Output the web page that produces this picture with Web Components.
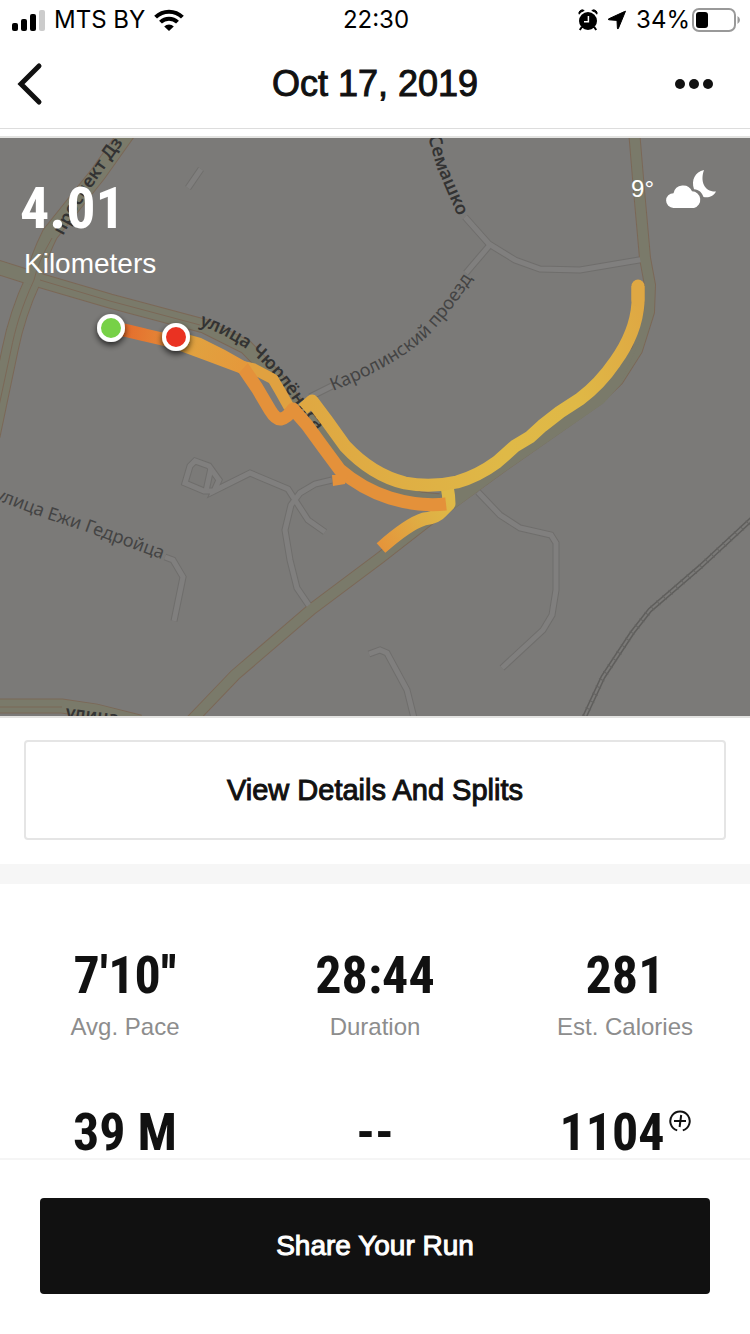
<!DOCTYPE html>
<html lang="en">
<head>
<meta charset="utf-8">
<meta name="viewport" content="width=device-width, initial-scale=1">
<title>Run summary</title>
<style>
    html, body {
        margin: 0;
        height: 100%;
    }
    body {
        background: #fff;
        color: #111;
        font-family: "Liberation Sans", Arial, sans-serif;
    }
</style>
</head>
<body>
<run-screen>
    <status-bar slot="top" carrier="MTS BY" time="22:30" battery="34%"></status-bar>
    <nav-header slot="top">Oct 17, 2019</nav-header>

    <run-map distance="4.01" unit="Kilometers" temperature="9°"></run-map>
    <details-link>View Details And Splits</details-link>
    <stat-grid>
        <run-stat value="7'10''">Avg. Pace</run-stat>
        <run-stat value="28:44">Duration</run-stat>
        <run-stat value="281">Est. Calories</run-stat>
        <run-stat value="39 M"></run-stat>
        <run-stat value="--"></run-stat>
        <run-stat value="1104" badge></run-stat>
    </stat-grid>

    <share-bar slot="bottom">Share Your Run</share-bar>
</run-screen>

<script>
/** Base class: fills an open shadow root from the subclass's template(). */
class BaseElement extends HTMLElement {
    constructor() {
        super();
        this.attachShadow({ mode: "open" });
    }

    connectedCallback() {
        this.shadowRoot.innerHTML = this.template();
    }

    attr(name) {
        return this.getAttribute(name) ?? "";
    }
}

/** Full-height column: fixed top, scrolling middle, fixed bottom. */
class RunScreen extends BaseElement {
    template() {
        return `
            <style>
                :host {
                    display: flex;
                    flex-direction: column;
                    height: 100vh;
                }
                main {
                    flex: 1;
                    min-height: 0;
                    overflow-y: auto;
                    scrollbar-width: none;
                }
            </style>
            <slot name="top"></slot>
            <main><slot></slot></main>
            <slot name="bottom"></slot>
        `;
    }
}

class StatusBar extends BaseElement {
    template() {
        return `
            <style>
                :host {
                    display: grid;
                    grid-template-columns: 1fr auto 1fr;
                    align-items: center;
                    flex: none;
                    height: 40px;
                    padding: 0 10px 0 12px;
                    color: #000;
                    font: 24px/40px Inter, "Liberation Sans", sans-serif;
                }
                .side {
                    display: flex;
                    align-items: center;
                    gap: 9px;
                }
                .end {
                    justify-content: flex-end;
                }
                .charge {
                    display: flex;
                    align-items: center;
                    gap: 2px;
                }
                svg {
                    display: block;
                }
            </style>
            <div class="side">
                <svg width="33" height="22" viewBox="0 0 33 22" aria-hidden="true">
                    <rect x="0" y="14" width="6" height="8" rx="2"/>
                    <rect x="9" y="10" width="6" height="12" rx="2"/>
                    <rect x="18" y="5" width="6" height="17" rx="2"/>
                    <rect x="27" y="1" width="6" height="21" rx="2" fill="#ccc"/>
                </svg>
                <span>${this.attr("carrier")}</span>
                <svg width="30" height="22" viewBox="0 0 30 22" aria-hidden="true">
                    <g fill="none" stroke="#000" stroke-width="4">
                        <path d="M1.6 8.2A19 19 0 0 1 28.4 8.2"/>
                        <path d="M6.5 13.2A12 12 0 0 1 23.5 13.2"/>
                    </g>
                    <path d="M10.2 17.4a6.8 6.8 0 0 1 9.6 0L15 22z"/>
                </svg>
            </div>
            <time>${this.attr("time")}</time>
            <div class="side end">
                <svg width="20" height="22" viewBox="0 0 20 22" aria-hidden="true">
                    <circle cx="10" cy="12" r="9"/>
                    <path d="M1 5.2A11 11 0 0 1 6.2 1.5 3.4 3.4 0 0 0 1 5.2zM19 5.2A11 11 0 0 0 13.8 1.5 3.4 3.4 0 0 1 19 5.2z" stroke="#000"/>
                    <path d="M3.8 18l-2 3M16.2 18l2 3" stroke="#000" stroke-width="2"/>
                    <path d="M10.400 7v5.800H6" fill="none" stroke="#fff" stroke-width="1.500"/>
                </svg>
                <svg width="20" height="20" viewBox="0 0 20 20" aria-hidden="true">
                    <path d="M18.500 1.200L11.400 18.400q-.8 1.400-1-.2L10 10.400 2 9.800q-1.600-.2-.2-1L17.400 1.600z" stroke="#000" stroke-linejoin="round"/>
                </svg>
                <div class="charge">
                    <span>${this.attr("battery")}</span>
                    <svg width="48" height="24" viewBox="0 0 48 24" aria-hidden="true">
                        <rect x="1" y="1" width="42" height="22" rx="6" fill="none" stroke="#999" stroke-width="2"/>
                        <rect x="4" y="4" width="12" height="16" rx="3"/>
                        <path d="M45.500 8q2.500 1.600 2.500 4t-2.500 4z" fill="#999"/>
                    </svg>
                </div>
            </div>
        `;
    }
}

class NavHeader extends BaseElement {
    template() {
        return `
            <style>
                :host {
                    display: grid;
                    grid-template-columns: 1fr auto 1fr;
                    align-items: center;
                    flex: none;
                    height: 88px;
                    padding: 0 12px;
                    border-bottom: 1px solid #ddd;
                }
                h1 {
                    margin: 0;
                    font-size: 36px;
                    font-weight: 400;
                    line-height: 40px;
                    -webkit-text-stroke: 1px #111;
                }
                button {
                    display: flex;
                    align-items: center;
                    width: 54px;
                    height: 54px;
                    padding: 0;
                    border: 0;
                    background: none;
                }
                .more {
                    justify-content: center;
                    justify-self: end;
                    margin-right: 17px;
                }
            </style>
            <button aria-label="Back">
                <svg width="36" height="44" viewBox="0 0 36 44" aria-hidden="true">
                    <path d="M27 4L9 22l18 18" fill="none" stroke="#111" stroke-width="5" stroke-linecap="round"/>
                </svg>
            </button>
            <h1><slot></slot></h1>
            <button class="more" aria-label="More">
                <svg width="40" height="10" viewBox="0 0 40 10" fill="#111" aria-hidden="true">
                    <circle cx="6" cy="5" r="5"/>
                    <circle cx="20" cy="5" r="5"/>
                    <circle cx="34" cy="5" r="5"/>
                </svg>
            </button>
        `;
    }
}

/** Street map with the recorded route, and the distance and weather over it. */
class RunMap extends BaseElement {
    // main roads: [path, width]
    static ROADS = [
        ["M132 126L98 174 50 234Q38 258 33 280C20 308 14 330 10 350L-8 436", 15],
        ["M-6 266L35 279 110 301 204 326 246 347 276 378 312 424 346 461 385 487 420 499 452 502", 13],
        ["M634 130L639 190 645 258 650 285 649 312 637 350 618 380 597 400 500 468 430 519 380 558 312 609 235 675 190 722", 10],
        ["M-4 706H62L96 711 140 722", 13],
    ];

    static STREETS = [
        "M188 188L201 169",
        "M465 217L489 244 515 260 540 269 580 270 645 259",
        "M489 246L466 273",
        "M332 386L310 397",
        "M214 491L204 491 185 483 190 466 195 461 209 466 219 480 214 491 250 473 288 489 295 500 308 520 325 532",
        "M211 468L206 491",
        "M332 480L315 484 300 493 291 505 285 530 290 560 297 588 312 610",
        "M478 492L500 515 520 528 551 535 556 543 556 590 552 615 543 630 502 668",
        "M369 654L380 650 387 653 407 690 414 718",
        "M165 557L173 560 183 577 174 621",
    ];

    map() {
        const roads = RunMap.ROADS;
        const streets = RunMap.STREETS;
        const layer = (list, extra) =>
            list.map(([d, w]) => `<path d="${d}" stroke-width="${w + extra}"/>`).join("");
        return `
            <svg class="map" viewBox="0 138 750 578" role="img" aria-label="Route map">
                <defs>
                    <linearGradient id="start" gradientUnits="userSpaceOnUse" x1="120" y1="330" x2="180" y2="340">
                        <stop offset="0" stop-color="#e56a2b"/>
                        <stop offset="1" stop-color="#e4913b"/>
                    </linearGradient>
                    <linearGradient id="merge" gradientUnits="userSpaceOnUse" x1="185" y1="340" x2="250" y2="375">
                        <stop offset="0" stop-color="#e0a340"/>
                        <stop offset="1" stop-color="#e6973a"/>
                    </linearGradient>
                    <linearGradient id="outer" gradientUnits="userSpaceOnUse" x1="305" y1="400" x2="640" y2="300">
                        <stop offset="0" stop-color="#dfa842"/>
                        <stop offset=".5" stop-color="#dfb947"/>
                        <stop offset=".75" stop-color="#dfb846"/>
                        <stop offset="1" stop-color="#dfa843"/>
                    </linearGradient>
                    <linearGradient id="spur" gradientUnits="userSpaceOnUse" x1="380" y1="550" x2="450" y2="500">
                        <stop offset="0" stop-color="#e5933a"/>
                        <stop offset=".6" stop-color="#dfae44"/>
                        <stop offset="1" stop-color="#dfb947"/>
                    </linearGradient>
                    <filter id="shadow" x="-50%" y="-50%" width="200%" height="200%">
                        <feDropShadow dx="0" dy="3" stdDeviation="3" flood-opacity=".7"/>
                    </filter>
                    <path id="avenue" d="M63 236L78 208 98 178 132 130"/>
                    <path id="semashko" d="M428 137L437 168 462 226"/>
                    <path id="karolinski" d="M333 391Q400 364 431 333 454 308 478 270"/>
                    <path id="churlionis" d="M199 325Q232 337 254 355 273 372 295 403L326 444"/>
                    <path id="giedroyc" d="M-6 499L50 520 87 532 178 565"/>
                    <path id="lower" d="M65 718L130 726"/>
                </defs>

                <rect y="138" width="750" height="578" fill="#7b7a78"/>

                <g fill="none" stroke="#6f6e6c" stroke-width="7">
                    ${streets.map((d) => `<path d="${d}"/>`).join("")}
                </g>
                <g fill="none" stroke="#7b6857">${layer(roads, 2)}</g>
                <g fill="none" stroke="#807f7e" stroke-width="5">
                    ${streets.map((d) => `<path d="${d}"/>`).join("")}
                </g>
                <g fill="none" stroke="#7a7a6a">${layer(roads, 0)}</g>
                <path d="M440 490L497 460 542 428 610 372 640 340 620 385 604 403 503 473 436 522z" fill="#7a7a6a"/>
                <g fill="none" stroke="#7b6857">
                    <path d="M52 238Q38 262 34 280C21 308 15 330 11 350L-4 420"/>
                    <path d="M40 280L110 301 200 325"/>
                    <path d="M0 707H62"/>
                </g>

                <!-- railway -->
                <g fill="none">
                    <path d="M754 517L700 567 650 610 632 633 603 677 584 718" stroke="#5f5e5c" stroke-width="5"/>
                    <path d="M754 517L700 567 650 610 632 633 603 677 584 718" stroke="#7b7a78" stroke-width="2"/>
                    <path d="M754 517L700 567 650 610 632 633 603 677 584 718" stroke="#656462" stroke-width="6" stroke-dasharray="1 7"/>
                </g>

                <g class="major">
                    <text><textPath href="#avenue">проспект Дз</textPath></text>
                    <text><textPath href="#semashko">Семашко</textPath></text>
                    <text><textPath href="#churlionis">улица Чюрлёниса</textPath></text>
                    <text><textPath href="#lower">улица</textPath></text>
                </g>
                <g class="minor">
                    <text><textPath href="#karolinski">Каролинский проезд</textPath></text>
                    <text><textPath href="#giedroyc">улица Ежи Гедройца</textPath></text>
                </g>

                <!-- recorded route -->
                <g fill="none" stroke-width="13" stroke-linejoin="round">
                    <path d="M447 486Q449 496 449 504L442 511Q436 518 424 519 408 524 381 548" stroke="url(#spur)"/>
                    <path d="M240 366L254 369 273 379 280 391 289 407" stroke="#e0a140" stroke-width="11"/>
                    <path d="M303 409L312 401 327 421 345 446Q372 475 405 483 430 488 457 482 478 476 497 462L515 446 530 437 542 426 560 412 580 399Q600 384 615 362 636 333 638 303V286" stroke="url(#outer)"/>
                    <path d="M638 300V286" stroke="#dfa843" stroke-linecap="round"/>
                    <path d="M242 366L257 388 270 410Q276 420 281 419 287 418 293 409L307 425 323 447 340 470Q362 489 390 498 420 507 446 504" stroke="#e4913a"/>
                    <path d="M332 475h16l-3 9-12 2z" fill="#e4913a" stroke="none"/>
                    <path d="M110 328Q128 330 145 335L175 342" stroke="url(#start)"/>
                </g>
                <path d="M183 333L201 338 225 350 248 363 239 373 207 361 180 351z" fill="url(#merge)"/>

                <g stroke="#fff" stroke-width="4" filter="url(#shadow)">
                    <circle cx="111" cy="328" r="12" fill="#77d147"/>
                    <circle cx="176" cy="337" r="12" fill="#ea3323"/>
                </g>
            </svg>
        `;
    }

    template() {
        return `
            <style>
                :host {
                    display: grid;
                    margin-top: 7px;
                    border: solid #e3e3e1;
                    border-width: 2px 0;
                    color: #fff;
                }
                .map, .overlay {
                    grid-area: 1 / 1;
                }
                .map {
                    display: block;
                    width: 100%;
                }
                .major, .minor {
                    font-family: "Noto Sans", "Open Sans", sans-serif;
                    font-size: 18px;
                }
                .major {
                    font-weight: 600;
                    fill: #333;
                }
                .minor {
                    fill: #444;
                }
                .overlay {
                    display: flex;
                    align-items: flex-start;
                    justify-content: space-between;
                    padding: 32px 34px 0 20px;
                }
                p {
                    margin: 0;
                }
                .distance {
                    font: 700 58px/76px "Roboto Condensed", "Liberation Sans Narrow", "Liberation Sans", sans-serif;
                }
                .unit {
                    padding-left: 4px;
                    font-size: 28px;
                    line-height: 36px;
                }
                .weather {
                    display: flex;
                    align-items: center;
                    gap: 12px;
                    font-size: 24px;
                    line-height: 38px;
                }
            </style>
            ${this.map()}
            <div class="overlay">
                <div>
                    <p class="distance">${this.attr("distance")}</p>
                    <p class="unit">${this.attr("unit")}</p>
                </div>
                <div class="weather">
                    <span>${this.attr("temperature")}</span>
                    <svg width="50" height="38" viewBox="0 0 50 38" fill="#fff" role="img" aria-label="Partly cloudy night">
                        <path d="M7.500 38A7.300 7.300 0 0 1 7.500 23.200 9.800 9.800 0 0 1 26 21.300 8.500 8.500 0 0 1 28 38z"/>
                        <path d="M38 0C34 11 38 22 50 21.500 47 27 42 28 37.500 27 36 22.500 33 19.500 28 19.200 25 10 29 2 38 0z"/>
                    </svg>
                </div>
            </div>
        `;
    }
}

class DetailsLink extends BaseElement {
    template() {
        return `
            <style>
                :host {
                    display: block;
                    padding: 22px 24px 24px;
                    border-bottom: 20px solid #f6f6f6;
                }
                button {
                    display: block;
                    width: 100%;
                    height: 100px;
                    border: 2px solid #e5e5e5;
                    border-radius: 4px;
                    background: #fff;
                    color: #111;
                    font: 29px/36px "Liberation Sans", Arial, sans-serif;
                    -webkit-text-stroke: 1px #111;
                }
            </style>
            <button><slot></slot></button>
        `;
    }
}

class StatGrid extends BaseElement {
    template() {
        return `
            <style>
                :host {
                    display: grid;
                    grid-template-columns: repeat(3, 1fr);
                    row-gap: 60px;
                    padding: 60px 0;
                }
            </style>
            <slot></slot>
        `;
    }
}

/** One figure with its caption; the badge attribute adds a plus mark. */
class RunStat extends BaseElement {
    template() {
        const badge = this.hasAttribute("badge")
            ? `<svg width="22" height="22" viewBox="0 0 22 22" fill="none" stroke="#111" stroke-width="2" role="img" aria-label="NikeFuel">
                   <path d="M8.200 20.400A9.700 9.700 0 1 1 13.800 20.400M5 11h12M12.200 5l-1.600 12"/>
               </svg>`
            : "";
        return `
            <style>
                :host {
                    display: flex;
                    flex-direction: column;
                    align-items: center;
                    gap: 5px;
                }
                .value {
                    display: flex;
                    gap: 4px;
                    font: 700 52px/64px "Roboto Condensed", "Liberation Sans Narrow", "Liberation Sans", sans-serif;
                }
                .label {
                    color: #8d8d8d;
                    font-size: 24px;
                    line-height: 28px;
                }
                svg {
                    margin-top: 9px;
                }
            </style>
            <div class="value"><span>${this.attr("value")}</span>${badge}</div>
            <div class="label"><slot></slot></div>
        `;
    }
}

class ShareBar extends BaseElement {
    template() {
        return `
            <style>
                :host {
                    display: block;
                    flex: none;
                    padding: 38px 40px 40px;
                    border-top: 2px solid #f5f5f5;
                    background: #fff;
                }
                button {
                    display: block;
                    width: 100%;
                    height: 96px;
                    border: 0;
                    border-radius: 4px;
                    background: #111;
                    color: #fff;
                    font: 28px/36px "Liberation Sans", Arial, sans-serif;
                    -webkit-text-stroke: 1px #fff;
                }
            </style>
            <button><slot></slot></button>
        `;
    }
}

customElements.define("run-screen", RunScreen);
customElements.define("status-bar", StatusBar);
customElements.define("nav-header", NavHeader);
customElements.define("run-map", RunMap);
customElements.define("details-link", DetailsLink);
customElements.define("stat-grid", StatGrid);
customElements.define("run-stat", RunStat);
customElements.define("share-bar", ShareBar);
</script>
</body>
</html>
